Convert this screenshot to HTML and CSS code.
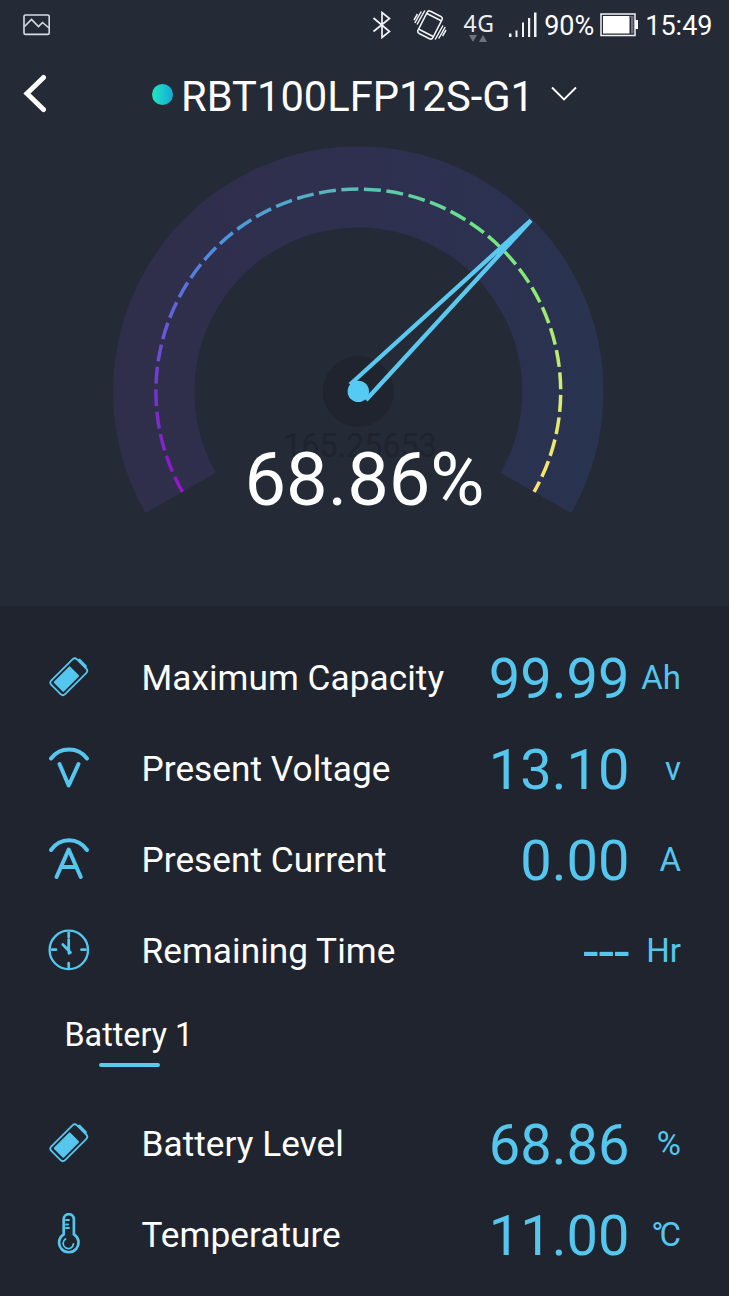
FILE: index.html
```html
<!DOCTYPE html>
<html lang="en">
<head>
<meta charset="utf-8">
<title>Battery monitor</title>
<link rel="stylesheet" href="styles.css">
</head>
<body>
<main class="app">
  <section class="top">
    <div class="status">
      <svg class="status-picture" width="28" height="22" viewBox="0 0 28 22" fill="none" stroke="#d9dce3" stroke-width="1.6"><rect x="1" y="1" width="25.2" height="19.4" rx="1.5"/><path d="M1.5 12.5 8.5 5.5 15.5 12.5 19.5 8.5 26 14"/></svg>
      <svg class="status-bt" width="20" height="28" viewBox="0 0 20 28" fill="none" stroke="#f2f3f6" stroke-width="1.7"><path d="M1.5 7 17.5 20.5 10 26.5V1.5L17.5 7.500 1.500 20.500"/></svg>
      <svg class="status-vibrate" width="34" height="30" viewBox="0 0 34 30" fill="none" stroke="#f2f3f6" stroke-width="1.5"><g transform="rotate(27 17 15)"><rect x="8.700" y="2.500" width="16.600" height="25" rx="2.500"/><path d="M9 6.200H25M9 23.800H25"/></g><path d="M11.800 .5 4 14.500M8.300 1.500 1.800 13M4.500 4 1 10M22.200 29.500 30 15.500M25.700 28.500 32.200 17M29.500 26 33 20"/></svg>
      <span class="network"><span>4G</span><svg width="20" height="7" viewBox="0 0 20 7" fill="#6d727e"><path d="M0 0H8L4 7ZM10 7H18L14 0Z"/></svg></span>
      <svg class="status-signal" width="30" height="26" viewBox="0 0 30 26" fill="#f2f3f6"><path d="M1 21.500H3.500V25H1ZM7.500 18.500H9.500V25H7.500ZM14 10.500H16V25H14ZM20 6H22.200V25H20ZM26 0.500H28.500V25H26Z"/></svg>
      <span class="clock">90%</span>
      <svg class="status-battery" width="38" height="24" viewBox="0 0 38 24"><path d="M35 7h3v9h-3z" fill="#fff"/><rect x="1" y="1" width="34" height="21.500" fill="none" stroke="#f2f3f6" stroke-width="1.500"/><path d="M3 3H29.500V20.500H3Z" fill="#fff"/><path d="M29.500 3H33.500V20.500H31V4H29.500Z" fill="#6d727e"/></svg>
      <span class="clock">15:49</span>
    </div>
    <header class="header">
      <svg class="back" width="24" height="40" viewBox="0 0 24 40" fill="none" stroke="#fff" stroke-width="5" stroke-linecap="round"><path d="M21.500 3.500 5 19.500 21.500 35.500"/></svg>
      <span class="online"></span>
      <h1 class="device">RBT100LFP12S-G1</h1>
      <svg class="chevron" width="26" height="16" viewBox="0 0 26 16" fill="none" stroke="#fff" stroke-width="1.900"><path d="M1 1.500 13 13.500 25 1.500"/></svg>
    </header>
    <div class="gauge">
      <svg class="dial" width="729" height="465" viewBox="0 140 729 465" fill="none">
        <defs><linearGradient id="band" x1="113" y1="391" x2="603" y2="430" gradientUnits="userSpaceOnUse"><stop offset="0" stop-color="#2f2f4b"/><stop offset=".5" stop-color="#2f3050"/><stop offset=".8" stop-color="#2b3250"/><stop offset="1" stop-color="#283450"/></linearGradient></defs>
        <path d="M180.620 492.820A204.500 204.500 0 1 1 535.980 492.820" stroke="url(#band)" stroke-width="81"/>
        <g id="ticks" stroke-width="3.500"></g>
        <circle cx="358.300" cy="391.500" r="35.500" fill="#20242f"/>
        <text class="raw" x="360" y="456.500">165.25653</text>
        <path d="M350 384.500 531 220.300 366 400" stroke="#5ac8ef" stroke-width="4.300" stroke-linejoin="bevel"/>
        <circle cx="358.300" cy="391.400" r="10.700" fill="#55cbf3"/>
      </svg>
      <div class="level">68.86%</div>
    </div>
  </section>

  <section class="list">
    <div class="row">
      <svg class="icon" width="42" height="42" viewBox="0 0 42 42"><use href="#cell"/></svg>
      <span class="label">Maximum Capacity</span><span class="value">99.99</span><span class="unit">Ah</span>
    </div>
    <div class="row">
      <svg class="icon" width="42" height="42" viewBox="0 0 42 42" fill="none" stroke="#55c7ee" stroke-width="4" stroke-linecap="round" stroke-linejoin="round"><path d="M3 11.500C12 -.5 30 -.5 39 11.500M11.500 17 20.700 38.500 30.500 17"/></svg>
      <span class="label">Present Voltage</span><span class="value">13.10</span><span class="unit">v</span>
    </div>
    <div class="row">
      <svg class="icon" width="42" height="42" viewBox="0 0 42 42" fill="none" stroke="#55c7ee" stroke-width="4" stroke-linecap="round" stroke-linejoin="round"><path d="M3 12C12 -1 30 -1 39 12M8.500 39 20.700 11.500 32.800 39M13 29H28.500"/></svg>
      <span class="label">Present Current</span><span class="value">0.00</span><span class="unit">A</span>
    </div>
    <div class="row">
      <svg class="icon" width="42" height="42" viewBox="0 0 42 42" fill="none" stroke="#55c7ee" stroke-width="2.300" stroke-linecap="round"><circle cx="20.800" cy="20.900" r="19.200"/><path d="M20.700 4V8M20.700 34V38M4 20.700H8M33.500 20.700H37.500M20.700 10.500V23M14.800 15.500 22.500 23.500M21 21V24.500" stroke-width="2.700"/></svg>
      <span class="label">Remaining Time</span><span class="value">---</span><span class="unit">Hr</span>
    </div>
  </section>

  <nav class="tabs"><span class="tab">Battery 1</span></nav>

  <section class="list">
    <div class="row">
      <svg class="icon" width="42" height="42" viewBox="0 0 42 42"><g id="cell" transform="translate(-.2 -.3) rotate(45 21 21)"><rect x="11.300" y="2.900" width="19.400" height="36.200" rx="3.200" fill="none" stroke="#55c7ee" stroke-width="1.800"/><rect x="14" y="12.800" width="14" height="23" rx="1" fill="#55c7ee"/><path d="M14.500 3 16 .4H26L27.500 3Z" fill="#55c7ee"/></g></svg>
      <span class="label">Battery Level</span><span class="value">68.86</span><span class="unit">%</span>
    </div>
    <div class="row">
      <svg class="icon" width="42" height="42" viewBox="0 0 42 42" fill="none" stroke="#55c7ee" stroke-width="2.700" stroke-linecap="round"><path d="M15.700 21.300V6.200a5.100 5.100 0 0 1 10.200 0V21.300a9.700 9.700 0 1 1-10.200 0Z"/><path d="M18 7H21M18 11.500H20M18 15H21M17.500 26a5.200 5.200 0 1 0 8 4.800" stroke-width="1.800"/></svg>
      <span class="label">Temperature</span><span class="value">11.00</span><span class="unit"><span class="degree">°</span>C</span>
    </div>
  </section>
</main>
<script src="gauge.js"></script>
</body>
</html>
```
FILE: styles.css
```css
* { box-sizing: border-box; }
body { margin: 0; background: #20242f; font-family: Roboto, sans-serif; color: #fff; }
.app { width: 729px; height: 1296px; overflow: hidden; background: #20242f; }
.top { height: 606px; background: #252a37; }

.status { display: flex; align-items: center; height: 50px; padding: 0 16.500px 0 23px; }
.status-bt { margin-left: auto; margin-right: 21px; }
.status-vibrate { margin-right: 16px; }
.network { display: flex; flex-direction: column; align-items: center; width: 32px; margin-right: 13px; padding-top: 3px; font: 23px/23px "Noto Sans", sans-serif; letter-spacing: .6px; color: #eceef2; }
.status-signal { margin-right: 6px; }
.status-battery { margin: 0 7px 0 6px; }
.clock { font-size: 27px; line-height: 30px; padding-top: 2px; }

.header { display: flex; align-items: center; height: 90px; padding: 0 0 2px 22px; }
.back { margin-right: 106px; }
.online { width: 21px; height: 21px; margin-right: 8px; border-radius: 50%; background: linear-gradient(90deg, #1fe8c0, #16a8d8); }
.device { margin: 5px 17px 0 0; font-size: 41.700px; line-height: 50px; font-weight: 400; }

.gauge { position: relative; height: 465px; }
.dial { display: block; }
.raw { fill: #1f232d; font-size: 32.300px; text-anchor: middle; }
.level { position: absolute; top: 296px; left: 0; width: 729px; text-align: center; font-size: 74px; line-height: 88px; }

.list { padding: 0 48px; }
.top + .list { padding-top: 26px; }
.row { display: flex; align-items: center; height: 91px; }
.icon { flex: none; margin: -1px 51.500px 0 0; }
.label { flex: 1; padding-top: 1px; font-size: 35.200px; line-height: 44px; letter-spacing: .05px; white-space: nowrap; }
.value { font-size: 56px; line-height: 66px; color: #55c7ee; padding-top: 2px; }
.unit { width: 51.500px; text-align: right; font-size: 33px; line-height: 40px; color: #55c7ee; white-space: nowrap; }
.degree { letter-spacing: -4px; }

.tabs { display: flex; height: 102px; padding: 19px 0 0 64.500px; }
.tab { position: relative; height: 50px; font-size: 32.300px; line-height: 41px; }
.tab::after { content: ""; position: absolute; left: 34.500px; bottom: -2px; width: 61px; height: 4px; border-radius: 2px; background: #5ac8ef; }
```
FILE: gauge.js
```js
// Draws the dashed scale, one arc per dash, coloured from purple to yellow.
const cx = 358.3, cy = 391.5, r = 202.4;
const start = 150.3, sweep = 239.4;
const total = r * sweep * Math.PI / 180, period = 22.55, dash = 17;
const stops = [
  [0, 148, 20, 198], [0.12, 118, 50, 204], [0.2, 104, 90, 216], [0.32, 74, 146, 224],
  [0.5, 90, 190, 180], [0.64, 104, 228, 136], [0.76, 146, 234, 112], [0.88, 216, 236, 110], [1, 255, 226, 104]
];
function colour(t) {
  let i = 1;
  while (i < stops.length - 1 && t > stops[i][0]) i++;
  const a = stops[i - 1], b = stops[i], k = (t - a[0]) / (b[0] - a[0]);
  return "rgb(" + [1, 2, 3].map(n => Math.round(a[n] + (b[n] - a[n]) * k)).join(",") + ")";
}
function point(s) {
  const a = (start + s / total * sweep) * Math.PI / 180;
  return (cx + r * Math.cos(a)).toFixed(2) + " " + (cy + r * Math.sin(a)).toFixed(2);
}
const ticks = document.getElementById("ticks");
for (let s = 0; s < total; s += period) {
  const e = Math.min(s + dash, total);
  const p = document.createElementNS("http://www.w3.org/2000/svg", "path");
  p.setAttribute("d", `M${point(s)}A${r} ${r} 0 0 1 ${point(e)}`);
  p.setAttribute("stroke", colour((s + e) / 2 / total));
  ticks.appendChild(p);
}
```
